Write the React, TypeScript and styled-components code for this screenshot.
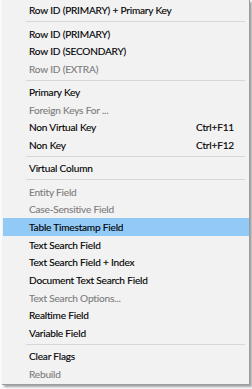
import styled, { createGlobalStyle } from "styled-components";

type Entry =
  | { kind: "sep" }
  | { kind: "item"; label: string; shortcut?: string; disabled?: boolean; active?: boolean };

const entries: Entry[] = [
  { kind: "item", label: "Row ID (PRIMARY) + Primary Key" },
  { kind: "sep" },
  { kind: "item", label: "Row ID (PRIMARY)" },
  { kind: "item", label: "Row ID (SECONDARY)" },
  { kind: "item", label: "Row ID (EXTRA)", disabled: true },
  { kind: "sep" },
  { kind: "item", label: "Primary Key" },
  { kind: "item", label: "Foreign Keys For ...", disabled: true },
  { kind: "item", label: "Non Virtual Key", shortcut: "Ctrl+F11" },
  { kind: "item", label: "Non Key", shortcut: "Ctrl+F12" },
  { kind: "sep" },
  { kind: "item", label: "Virtual Column" },
  { kind: "sep" },
  { kind: "item", label: "Entity Field", disabled: true },
  { kind: "item", label: "Case-Sensitive Field", disabled: true },
  { kind: "item", label: "Table Timestamp Field", active: true },
  { kind: "item", label: "Text Search Field" },
  { kind: "item", label: "Text Search Field + Index" },
  { kind: "item", label: "Document Text Search Field" },
  { kind: "item", label: "Text Search Options...", disabled: true },
  { kind: "item", label: "Realtime Field" },
  { kind: "item", label: "Variable Field" },
  { kind: "sep" },
  { kind: "item", label: "Clear Flags" },
  { kind: "item", label: "Rebuild", disabled: true },
];

export default function App() {
  return (
    <>
      <GlobalStyle />
      <Page>
        <Menu>
          {entries.map((e, i) =>
            e.kind === "sep" ? (
              <Separator key={i} />
            ) : (
              <Item key={i} $disabled={e.disabled} $active={e.active}>
                <span>{e.label}</span>
                {e.shortcut && <Shortcut>{e.shortcut}</Shortcut>}
              </Item>
            )
          )}
        </Menu>
      </Page>
    </>
  );
}

const GlobalStyle = createGlobalStyle`
  html, body {
    margin: 0;
    padding: 0;
    background: #f9fafc;
  }
  body {
    font-family: Lato, "Noto Sans", sans-serif;
  }
`;

const Page = styled.div`
  width: 252px;
  height: 389px;
  overflow: hidden;
  padding-left: 2px;
  box-sizing: border-box;
`;

const Menu = styled.div`
  width: 246px;
  background: #f2f2f2;
  padding: 1.5px 0 1px 1px;
  border-right: 1px solid #9c9c9c;
  border-bottom: 1px solid #9c9c9c;
  box-shadow: 2px 2px 2px rgba(0, 0, 0, 0.35);
`;

const Item = styled.div<{ $disabled?: boolean; $active?: boolean }>`
  display: flex;
  align-items: center;
  justify-content: space-between;
  height: 17.7px;
  padding: 0 15px 0 26px;
  font-size: 10.1px;
  letter-spacing: -0.2px;
  color: ${(p) => (p.$disabled ? "#7d7d7d" : "#000")};
  background: ${(p) => (p.$active ? "#91c9f7" : "transparent")};
  white-space: nowrap;
  -webkit-text-stroke: 0.12px currentColor;
`;

const Shortcut = styled.span`
  font-size: 10.1px;
`;

const Separator = styled.div`
  height: 5.5px;
  display: flex;
  align-items: center;
  padding: 0 4px 0 23px;

  &::after {
    content: "";
    flex: 1;
    height: 1px;
    background: #d7d7d7;
  }
`;
